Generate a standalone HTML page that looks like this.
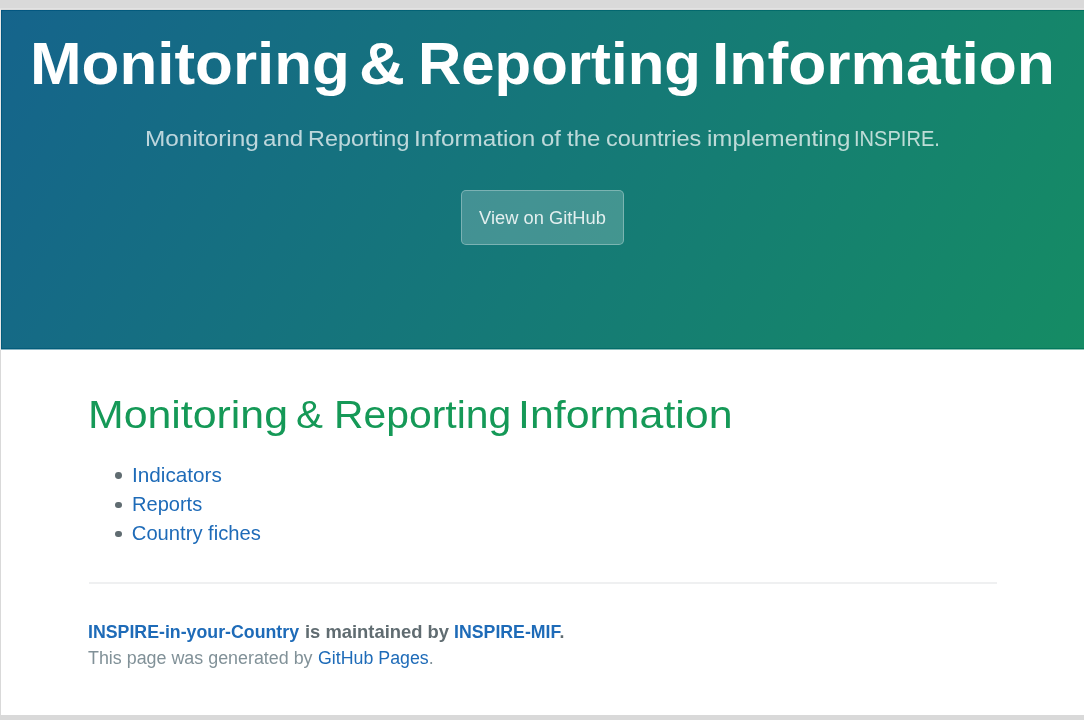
<!DOCTYPE html>
<html>
<head>
<meta charset="utf-8">
<style>
html,body{margin:0;padding:0;}
body{width:1084px;height:720px;background:#d9d9d9;position:relative;overflow:hidden;font-family:"Liberation Sans",sans-serif;}
#page{position:absolute;left:1px;top:10px;width:1083px;height:705px;background:#fff;}
#hdr{position:absolute;left:1px;top:10px;width:1083px;height:340px;background:linear-gradient(120deg,#15648c,#158c64);}
.mb{position:absolute;background:rgb(25,220,235);mix-blend-mode:multiply;}
#hdrb{position:absolute;left:1px;top:349px;width:1083px;height:1px;background:rgba(255,255,255,0.5);}
#halo1{position:absolute;left:0;top:8px;width:1084px;height:1px;background:rgba(255,255,255,0.25);}
#halo2{position:absolute;left:0;top:9px;width:1px;height:341px;background:rgba(255,255,255,0.4);}
.t{position:absolute;white-space:nowrap;line-height:1;transform-origin:0 0;}
.ti{color:#fff;font-weight:bold;font-size:59.5px;}
.su{color:rgba(255,255,255,0.72);font-size:22.2px;}
.hh{color:#159957;font-size:39.15px;}
#t1{left:29.84px;top:33.63px;transform:scaleX(1.0408);}
#t2{left:358.79px;top:33.63px;transform:scaleX(1.0684);}
#t3{left:417.77px;top:33.63px;transform:scaleX(1.0070);}
#t4{left:712.01px;top:33.63px;transform:scaleX(1.0481);}
#s1{left:145.10px;top:128.0px;transform:scaleX(1.0990);}
#s2{left:262.91px;top:128.0px;transform:scaleX(1.0857);}
#s3{left:307.89px;top:128.0px;transform:scaleX(1.0538);}
#s4{left:413.71px;top:128.0px;transform:scaleX(1.0926);}
#s5{left:540.72px;top:128.0px;transform:scaleX(1.0778);}
#s6{left:566.70px;top:128.0px;transform:scaleX(1.0767);}
#s7{left:606.34px;top:128.0px;transform:scaleX(1.0591);}
#s8{left:706.73px;top:128.0px;transform:scaleX(1.0867);}
#s9{left:854.39px;top:128.0px;transform:scaleX(0.9044);}
#h1{left:87.92px;top:394.86px;transform:scaleX(1.0944);}
#h2{left:296.37px;top:394.86px;transform:scaleX(1.0320);}
#h3{left:334.37px;top:394.86px;transform:scaleX(1.0442);}
#h4{left:518.42px;top:394.86px;transform:scaleX(1.0958);}
#btn{position:absolute;left:461px;top:190px;width:163px;height:55px;box-sizing:border-box;border:1px solid rgba(255,255,255,0.3);border-radius:5px;background:rgba(255,255,255,0.2);}
#btnt{color:rgba(255,255,255,0.85);font-size:19.2px;left:479px;top:207.65px;transform:scaleX(0.9545);}
.li{color:#1e6bb8;font-size:20.2px;left:131.8px;}
.bul{position:absolute;width:6.8px;height:6.8px;border-radius:50%;background:#606c71;left:115.1px;margin-top:-0.3px;}
#hr{position:absolute;left:88.5px;top:582px;width:908.5px;height:2px;background:#eff0f1;}
.f1{font-size:18.5px;font-weight:bold;color:#606c71;}
.f2{font-size:18px;color:#819198;}
#fa{left:88.34px;top:622.84px;transform:scaleX(0.9594);}
#fb{left:304.81px;top:622.84px;transform:scaleX(0.9931);}
#fc{left:454.34px;top:622.84px;transform:scaleX(0.9584);}
#ga{left:87.90px;top:648.96px;transform:scaleX(0.9929);}
#gb{left:317.71px;top:648.96px;transform:scaleX(0.9877);}
a{color:#1e6bb8;text-decoration:none;}
</style>
</head>
<body>
<div id="page"></div>
<div id="hdr"></div>
<div class="mb" style="left:1px;top:10px;width:1083px;height:1px"></div>
<div class="mb" style="left:1px;top:11px;width:1px;height:337px"></div>
<div class="mb" style="left:1px;top:348px;width:1083px;height:1px"></div>
<div id="hdrb"></div>
<div id="halo1"></div>
<div id="halo2"></div>
<div class="t ti" id="t1">Monitoring</div>
<div class="t ti" id="t2">&amp;</div>
<div class="t ti" id="t3">Reporting</div>
<div class="t ti" id="t4">Information</div>
<div class="t su" id="s1">Monitoring</div>
<div class="t su" id="s2">and</div>
<div class="t su" id="s3">Reporting</div>
<div class="t su" id="s4">Information</div>
<div class="t su" id="s5">of</div>
<div class="t su" id="s6">the</div>
<div class="t su" id="s7">countries</div>
<div class="t su" id="s8">implementing</div>
<div class="t su" id="s9">INSPIRE.</div>
<div id="btn"></div>
<div class="t" id="btnt">View on GitHub</div>
<div class="t hh" id="h1">Monitoring</div>
<div class="t hh" id="h2">&amp;</div>
<div class="t hh" id="h3">Reporting</div>
<div class="t hh" id="h4">Information</div>
<div class="bul" style="top:472.7px"></div>
<div class="t li" style="top:464.7px;left:131.75px;transform:scaleX(1.027)">Indicators</div>
<div class="bul" style="top:501.8px"></div>
<div class="t li" style="top:493.8px;transform:scaleX(0.993)">Reports</div>
<div class="bul" style="top:530.8px"></div>
<div class="t li" style="top:522.8px">Country fiches</div>
<div id="hr"></div>
<div class="t f1" id="fa"><a>INSPIRE-in-your-Country</a></div>
<div class="t f1" id="fb">is maintained by</div>
<div class="t f1" id="fc"><a>INSPIRE-MIF</a>.</div>
<div class="t f2" id="ga">This page was generated by</div>
<div class="t f2" id="gb"><a>GitHub Pages</a>.</div>
</body>
</html>
